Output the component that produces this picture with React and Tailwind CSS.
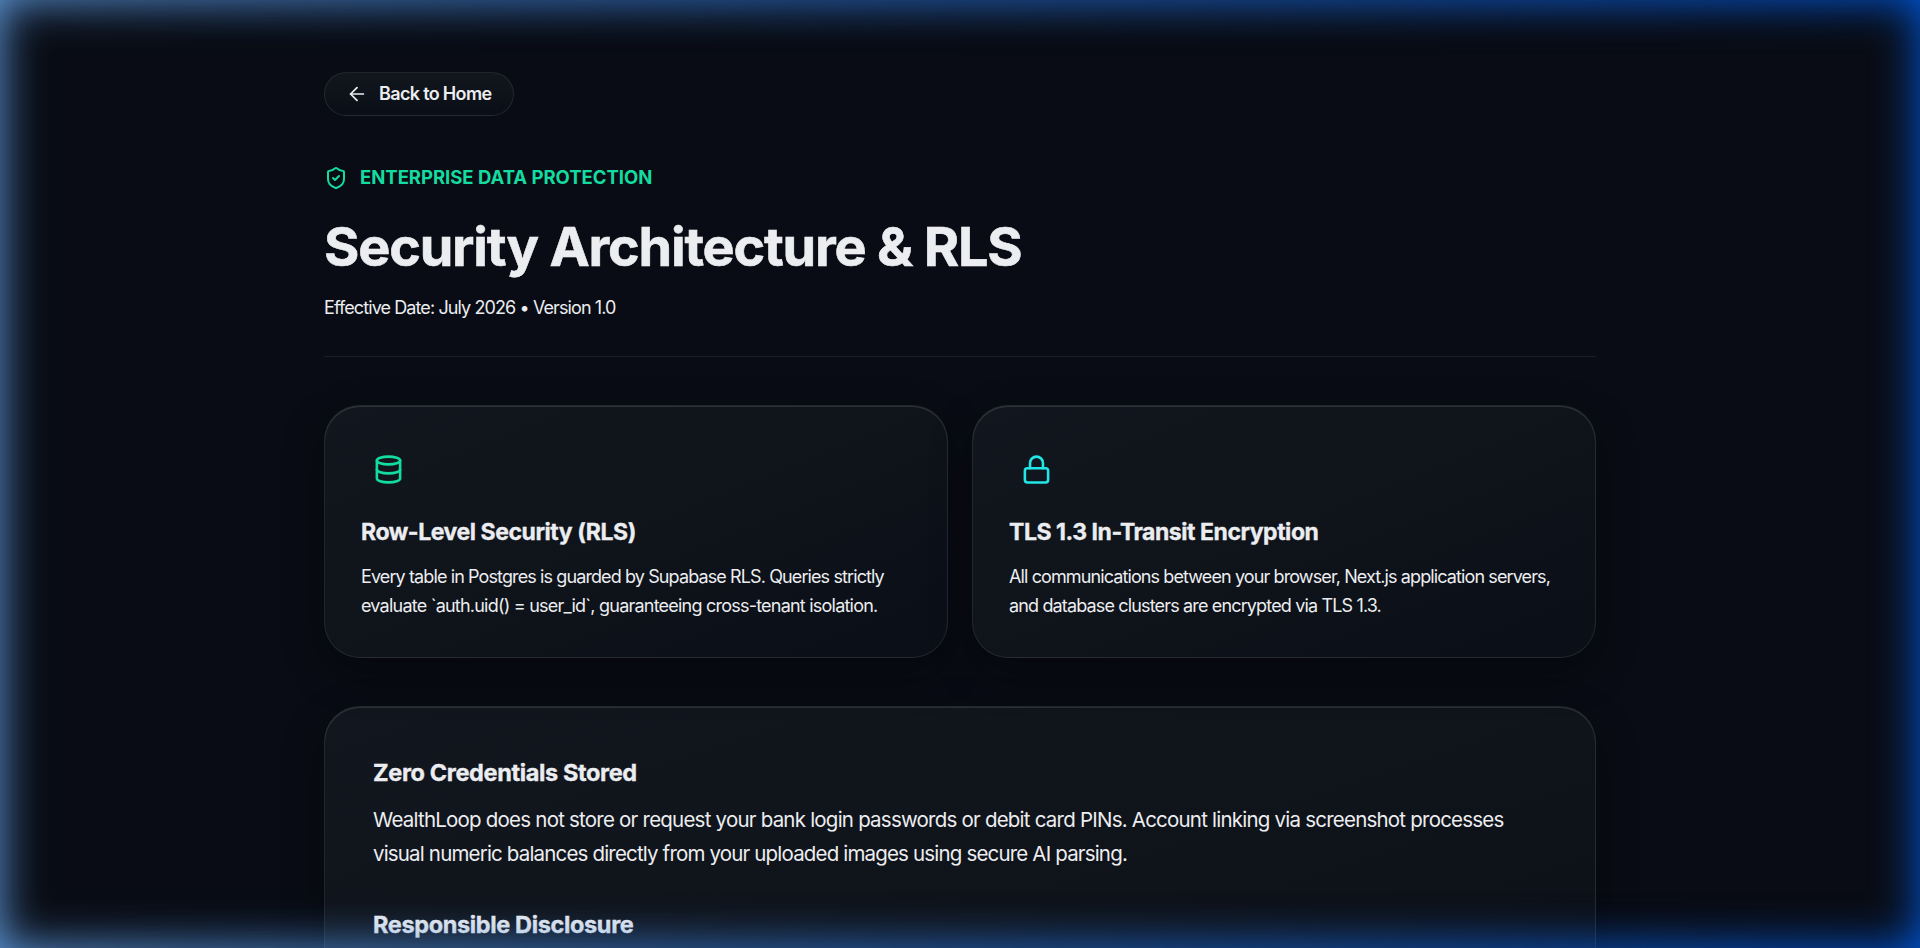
import React from 'react';
import { ArrowLeft, ShieldCheck, Database, Lock } from 'lucide-react';

const panel =
  'rounded-[36px] border border-white/[0.09] bg-linear-to-br from-[#12171f] via-[#0f131a] to-[#0a0f18] shadow-[0_16px_40px_rgba(0,0,0,0.36),inset_0_1px_0_rgba(255,255,255,0.12)]';

function FeatureCard({ icon, title, titleClass, lines, lastLineClass }) {
  return (
    <article className={`${panel} px-9 pt-9 pb-[37px]`}>
      <div className="flex size-[54px] items-center justify-center">{icon}</div>
      <h2
        className={`mt-[21px] text-[23px] leading-[30px] font-bold whitespace-nowrap [-webkit-text-stroke:0.35px_currentColor] ${titleClass}`}
      >
        {title}
      </h2>
      <p className="mt-[15px] text-[18px] leading-[29px] tracking-[-0.89px] whitespace-nowrap">
        {lines[0]}
        <br />
        <span className={lastLineClass}>{lines[1]}</span>
      </p>
    </article>
  );
}

export default function App() {
  return (
    <div className="relative h-screen overflow-hidden bg-[#090c14] font-['Inter',sans-serif] text-[#ecedf0]">
      <main className="mx-auto w-[1272px] pt-[72px]">
        <a className="flex h-11 w-[190px] items-center gap-[11.5px] rounded-full border border-white/[0.09] bg-linear-to-b from-[#12161d] to-[#0a0e16] pb-px pl-[20.5px] text-[18px] font-semibold tracking-[-0.66px] whitespace-nowrap">
          <ArrowLeft size={22} strokeWidth={1.9} className="mt-px shrink-0" />
          Back to Home
        </a>

        <header className="border-b border-white/[0.08] pb-[34px]">
          <div className="mt-[50px] flex h-6 items-center gap-3 text-[18.5px] font-bold tracking-[-0.02px] text-[#14dca0]">
            <ShieldCheck size={24} strokeWidth={2} className="shrink-0" />
            ENTERPRISE DATA PROTECTION
          </div>
          <h1 className="mt-[27px] text-[54px] leading-[60px] font-bold tracking-[-1.2px] [-webkit-text-stroke:0.6px_currentColor]">
            Security Architecture &amp; RLS
          </h1>
          <p className="mt-[17px] text-[18px] leading-7 tracking-[-0.9px]">Effective Date: July 2026 • Version 1.0</p>
        </header>

        <section className="mt-12 grid grid-cols-2 gap-6">
          <FeatureCard
            icon={<Database size={31} strokeWidth={2} className="text-[#14dca0]" />}
            title="Row-Level Security (RLS)"
            titleClass="tracking-[-0.44px]"
            lastLineClass="tracking-[-0.78px]"
            lines={[
              'Every table in Postgres is guarded by Supabase RLS. Queries strictly',
              'evaluate `auth.uid() = user_id`, guaranteeing cross-tenant isolation.',
            ]}
          />
          <FeatureCard
            icon={<Lock size={31} strokeWidth={2} className="text-[#22e5e5]" />}
            title="TLS 1.3 In-Transit Encryption"
            titleClass="tracking-[-0.46px]"
            lastLineClass="tracking-[-0.85px]"
            lines={[
              'All communications between your browser, Next.js application servers,',
              'and database clusters are encrypted via TLS 1.3.',
            ]}
          />
        </section>

        <section className={`${panel} mt-12 h-[440px] px-12 pt-[50px]`}>
          <h2 className="text-[23.5px] leading-8 font-bold tracking-[-0.36px] [-webkit-text-stroke:0.35px_currentColor]">
            Zero Credentials Stored
          </h2>
          <p className="mt-[14px] text-[20.5px] leading-[34px] tracking-[-0.78px] whitespace-nowrap">
            WealthLoop does not store or request your bank login passwords or debit card PINs. Account linking via screenshot processes
            <br />
            <span className="tracking-[-0.83px]">
              visual numeric balances directly from your uploaded images using secure AI parsing.
            </span>
          </p>
          <h2 className="mt-[38px] text-[23.5px] leading-8 font-bold tracking-[-0.36px] [-webkit-text-stroke:0.35px_currentColor]">
            Responsible Disclosure
          </h2>
        </section>
      </main>

      {/* Viewport edge glow, pale blue on the left blending to deep blue on the right */}
      <div className="pointer-events-none absolute inset-0 shadow-[inset_0_0_46px_rgb(98,158,225)] [mask-image:linear-gradient(to_right,black,transparent)]" />
      <div className="pointer-events-none absolute inset-0 shadow-[inset_0_0_46px_rgb(0,90,225)] [mask-image:linear-gradient(to_left,black,transparent)]" />
    </div>
  );
}
